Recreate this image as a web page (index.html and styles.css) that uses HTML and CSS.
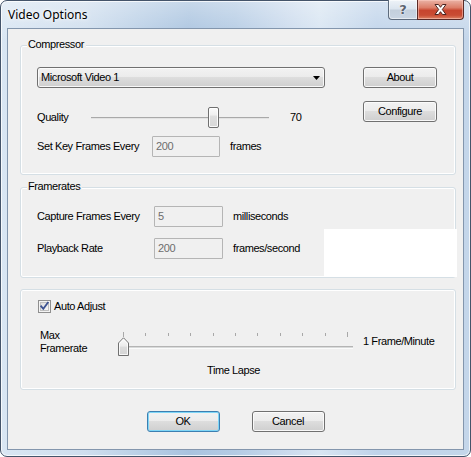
FILE: index.html
```html
<!DOCTYPE html>
<html>
<head>
<meta charset="utf-8">
<title>Video Options</title>
<link rel="stylesheet" href="styles.css">
</head>
<body>
<div class="window">
  <div class="titlebar">
    <div class="title">Video Options</div>
    <div class="caption-btns">
      <div class="cap-btn cap-help"><span class="help-glyph">?</span></div>
      <div class="cap-btn cap-close">
        <svg width="15" height="13" viewBox="0 0 15 13">
          <path d="M2 1.5 L5.5 1.5 L7.5 4.3 L9.5 1.5 L13 1.5 L9.3 6.5 L13 11.5 L9.5 11.5 L7.5 8.7 L5.5 11.5 L2 11.5 L5.7 6.5 Z" fill="#fff" stroke="#4a2420" stroke-width="1" stroke-linejoin="round"/>
        </svg>
      </div>
    </div>
  </div>
  <div class="client">
    <div class="group group-compressor">
      <div class="group-label">Compressor</div>
      <div class="row row-codec">
        <div class="combo">
          <span>Microsoft Video 1</span>
          <svg class="combo-arrow" width="7" height="4" viewBox="0 0 7 4"><path d="M0 0 H7 L3.5 4 Z" fill="#000"/></svg>
        </div>
        <div class="btn btn-side">About</div>
      </div>
      <div class="row row-quality">
        <div class="quality">
          <span class="quality-label">Quality</span>
          <div class="hslider">
            <div class="channel"></div>
            <div class="rect-thumb"></div>
          </div>
          <span class="quality-value">70</span>
        </div>
        <div class="btn btn-side">Configure</div>
      </div>
      <div class="row row-field row-keyframes">
        <span class="field-label kf-label">Set Key Frames Every</span>
        <div class="edit edit-kf">200</div>
        <span class="unit">frames</span>
      </div>
    </div>

    <div class="group group-framerates">
      <div class="group-label">Framerates</div>
      <div class="row row-field row-capture">
        <span class="field-label fr-label">Capture Frames Every</span>
        <div class="edit edit-fr">5</div>
        <span class="unit">milliseconds</span>
      </div>
      <div class="row row-field row-playback">
        <span class="field-label fr-label">Playback Rate</span>
        <div class="edit edit-fr">200</div>
        <span class="unit">frames/second</span>
      </div>
      <div class="blank-panel"></div>
    </div>

    <div class="group group-auto">
      <div class="row row-check">
        <svg class="checkbox" width="13" height="13" viewBox="0 0 13 13">
          <defs>
            <linearGradient id="cbg" x1="0" y1="0" x2="1" y2="1">
              <stop offset="0" stop-color="#dcdcdc"/>
              <stop offset="1" stop-color="#f8f8f8"/>
            </linearGradient>
          </defs>
          <rect x="0.5" y="0.5" width="12" height="12" fill="#f4f4f4" stroke="#8f8f8f"/>
          <rect x="2.5" y="2.5" width="8" height="8" fill="url(#cbg)" stroke="#c0c0c0"/>
          <path d="M3.2 6.3 L5.3 8.8 L9.8 2.8" fill="none" stroke="#3c5291" stroke-width="1.8" stroke-linecap="square"/>
        </svg>
        <span class="check-label">Auto Adjust</span>
      </div>
      <div class="row row-maxrate">
        <div class="maxrate-label">Max<br>Framerate</div>
        <div class="tslider">
          <div class="ticks">
            <i class="tick tick-end"></i><i class="tick"></i><i class="tick"></i><i class="tick"></i><i class="tick"></i><i class="tick"></i><i class="tick"></i><i class="tick"></i><i class="tick"></i><i class="tick"></i><i class="tick tick-end"></i>
          </div>
          <div class="tchannel"></div>
          <svg class="point-thumb" width="11" height="19" viewBox="0 0 11 19">
            <defs>
              <linearGradient id="ptg" x1="0" y1="0" x2="0" y2="1">
                <stop offset="0" stop-color="#fdfdfd"/>
                <stop offset="0.45" stop-color="#ececec"/>
                <stop offset="0.55" stop-color="#dcdcdc"/>
                <stop offset="1" stop-color="#d4d4d4"/>
              </linearGradient>
            </defs>
            <path d="M0.5 18.5 V6 L5.5 0.8 L10.5 6 V18.5 Z" fill="url(#ptg)" stroke="#707070"/>
            <path d="M1.5 17.5 V6.4 L5.5 2.2 L9.5 6.4 V17.5 Z" fill="none" stroke="#ffffff" stroke-opacity="0.8"/>
          </svg>
        </div>
        <span class="maxrate-value">1 Frame/Minute</span>
      </div>
      <div class="row row-lapse">
        <span class="lapse">Time Lapse</span>
      </div>
    </div>

    <div class="actions">
      <div class="btn btn-action btn-default">OK</div>
      <div class="btn btn-action">Cancel</div>
    </div>
  </div>
</div>
</body>
</html>
```

FILE: styles.css
```css
* { box-sizing: border-box; }
html, body { margin: 0; padding: 0; }
body { width: 471px; height: 457px; overflow: hidden; background: #ffffff; }

.window {
  width: 471px;
  height: 457px;
  border: 1px solid #44546a;
  border-radius: 7px;
  display: flex;
  flex-direction: column;
  background:
    linear-gradient(180deg, rgba(255,255,255,0.35) 0px, rgba(255,255,255,0) 40px),
    linear-gradient(90deg, #d9e6f3 0%, #cfdeee 18%, #b9cfe6 30%, #a9c3df 40%, #b4cbe4 50%, #cddcee 62%, #d8e5f2 68%, #bfd3ea 80%, #c4d6ea 100%);
  box-shadow: inset 0 0 0 1px rgba(255,255,255,0.75);
}

.titlebar {
  height: 27px;
  display: flex;
  align-items: flex-start;
  padding-left: 7px;
}
.title {
  font-family: "Noto Sans", "Open Sans", sans-serif;
  font-size: 12px;
  line-height: 16px;
  margin-top: 6px;
  color: #000;
  text-shadow: 0 0 6px rgba(255,255,255,0.95), 0 0 3px rgba(255,255,255,0.9);
}
.caption-btns {
  margin-left: auto;
  margin-right: 6px;
  display: flex;
  height: 19px;
  margin-top: -1px;
}
.cap-btn {
  height: 20px;
  display: flex;
  align-items: center;
  justify-content: center;
  border: 1px solid #5d6b7d;
  border-top: none;
}
.cap-help {
  width: 29px;
  border-right: none;
  border-radius: 0 0 0 4px;
  background: linear-gradient(180deg, #eef3f8 0%, #dce5ef 45%, #c3cfdc 55%, #c9d5e3 100%);
  box-shadow: inset 0 0 0 1px rgba(255,255,255,0.55);
}
.help-glyph {
  font-family: "DejaVu Sans", sans-serif;
  font-weight: bold;
  font-size: 13px;
  line-height: 13px;
  color: #5b6370;
  text-shadow: 0 0 1px #fff, 0 0 2px #fff;
}
.cap-close {
  width: 47px;
  border-radius: 0 0 4px 0;
  border-color: #5a2a26;
  background: linear-gradient(180deg, #eab3a6 0%, #dc7e69 40%, #c7452e 55%, #c94c33 80%, #dd8364 100%);
  box-shadow: inset 0 0 0 1px rgba(255,210,200,0.5);
}

.client {
  flex: 1;
  margin: 0 6px 6px 6px;
  border: 1px solid #8396ad;
  background: #f0f0f0;
  padding: 16px 0 0 12px;
  font-family: "Liberation Sans", Arial, sans-serif;
  font-size: 11px;
  line-height: 13px;
  letter-spacing: -0.4px;
  color: #000;
}

.group {
  position: relative;
  width: 436px;
  border: 1px solid #d5dfe5;
  border-radius: 3px;
  box-shadow: inset 0 0 0 1px #ffffff;
}
.group-label {
  position: absolute;
  top: -8px;
  left: 6px;
  padding: 0 2px 0 1px;
  background: #f0f0f0;
  line-height: 13px;
}
.group-compressor { height: 130px; padding-left: 16px; }
.group-framerates { height: 91px; margin-top: 12px; padding-left: 16px; }
.group-auto { height: 101px; margin-top: 11px; }

.row { display: flex; align-items: center; }

.row-codec { margin-top: 21px; height: 21px; }
.combo {
  width: 288px;
  height: 21px;
  display: flex;
  align-items: center;
  justify-content: space-between;
  padding: 0 4px 0 3px;
  border: 1px solid #707070;
  border-radius: 3px;
  background: linear-gradient(180deg, #f2f2f2 0%, #ebebeb 50%, #dddddd 50%, #cfcfcf 100%);
  box-shadow: inset 0 0 0 1px rgba(252,252,252,0.9);
}
.combo-arrow { display: block; }

.btn {
  height: 21px;
  display: flex;
  align-items: center;
  justify-content: center;
  border: 1px solid #707070;
  border-radius: 3px;
  background: linear-gradient(180deg, #f2f2f2 0%, #ebebeb 50%, #dddddd 50%, #cfcfcf 100%);
  box-shadow: inset 0 0 0 1px rgba(252,252,252,0.9);
}
.btn-side { width: 74px; margin-left: 38px; }

.row-quality { margin-top: 13px; height: 22px; align-items: flex-start; }
.quality {
  width: 288px;
  height: 21px;
  margin-top: 6px;
  display: flex;
  align-items: center;
}
.quality-label { width: 54px; }
.hslider {
  position: relative;
  width: 178px;
  height: 21px;
  display: flex;
  align-items: center;
}
.channel {
  width: 178px;
  height: 2px;
  border-top: 1px solid #a9a9a9;
  border-bottom: 1px solid #e3e3e3;
}
.rect-thumb {
  position: absolute;
  left: 117px;
  top: 0;
  width: 11px;
  height: 21px;
  border: 1px solid #707070;
  border-radius: 2px;
  background: linear-gradient(180deg, #fbfbfb 0%, #f0f0f0 35%, #dedede 45%, #d8d8d8 100%);
  box-shadow: inset 0 0 0 1px rgba(255,255,255,0.85);
}
.quality-value { margin-left: 21px; }
.row-quality .btn-side { margin-left: 38px; }

.row-keyframes { margin-top: 13px; height: 21px; }
.field-label { display: block; }
.kf-label { width: 115px; }
.fr-label { width: 117px; }
.edit {
  height: 21px;
  border: 1px solid #b5b5b5;
  border-radius: 1px;
  background: #f0f0f0;
  color: #6d6d6d;
  padding: 0 3px;
  display: flex;
  align-items: center;
}
.edit-kf { width: 68px; }
.edit-fr { width: 69px; }
.unit { margin-left: 10px; }

.row-capture { margin-top: 18px; height: 21px; }
.row-playback { margin-top: 11px; height: 21px; }

.blank-panel {
  position: absolute;
  left: 303px;
  top: 41px;
  width: 133px;
  height: 48px;
  background: #ffffff;
}

.row-check { margin-top: 10px; height: 13px; padding-left: 17px; }
.checkbox { display: block; }
.check-label { margin-left: 3px; }

.row-maxrate {
  margin-top: 16px;
  height: 27px;
  padding-left: 19px;
  align-items: flex-start;
}
.maxrate-label { width: 78px; line-height: 13px; }
.tslider {
  position: relative;
  width: 235px;
  height: 27px;
  padding-top: 3px;
}
.ticks {
  margin: 0 5px;
  height: 5px;
  display: flex;
  justify-content: space-between;
  align-items: flex-start;
}
.tick {
  display: block;
  width: 1px;
  height: 3px;
  margin-top: 1px;
  background: #a8a8a8;
}
.tick-end { height: 5px; margin-top: 0; }
.tchannel {
  margin-top: 9px;
  height: 3px;
  border-top: 1px solid #b4b4b4;
  background: #d8dada;
  border-bottom: 1px solid #fbfbfb;
}
.point-thumb {
  position: absolute;
  left: 0;
  top: 8px;
  display: block;
}
.maxrate-value { margin-left: 10px; margin-top: 6px; }

.row-lapse { margin-top: 8px; height: 13px; padding-left: 186px; }

.actions {
  margin-top: 21px;
  margin-left: -12px;
  display: flex;
  justify-content: center;
  gap: 32px;
}
.btn-action { width: 73px; }
.btn-default {
  border-color: #3c7fb1;
  box-shadow: inset 0 0 0 1px #7fd6f7;
}
```
